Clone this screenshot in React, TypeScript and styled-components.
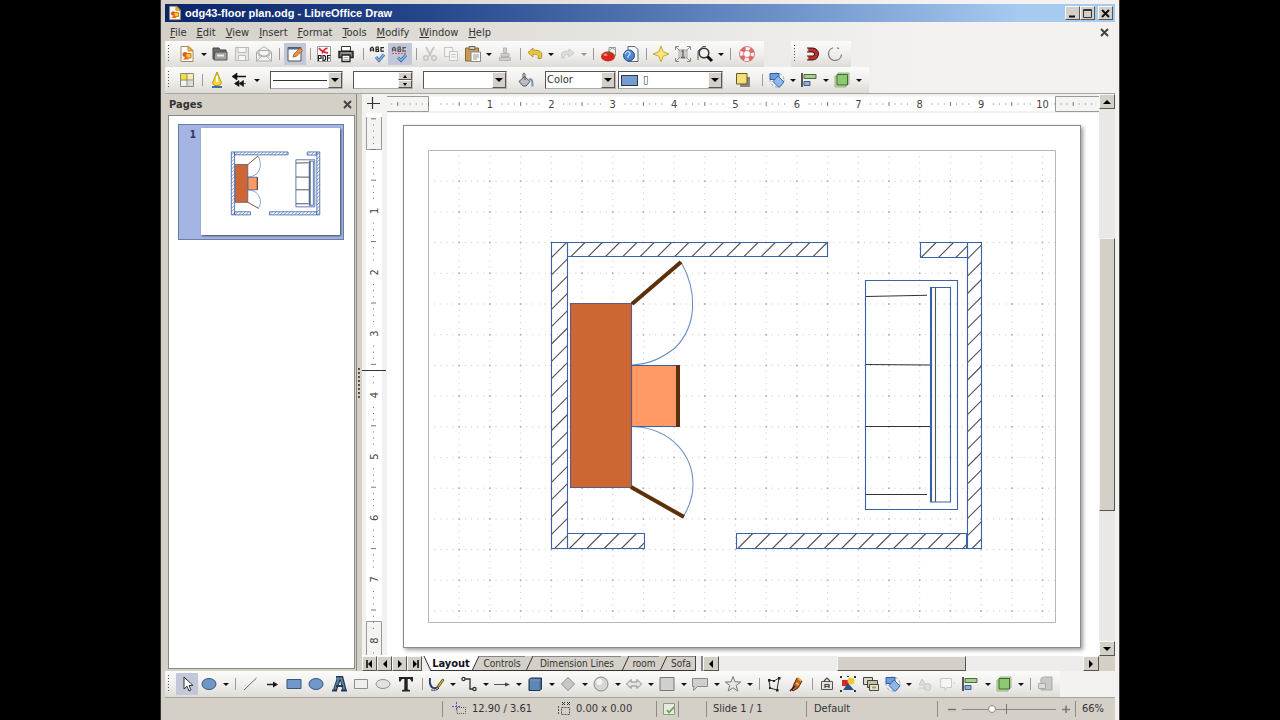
import React from "react";
import styled, { createGlobalStyle, css } from "styled-components";

const FACE = "#d4d0c8";
const BLUE = "#3a62a8";
const DARK = "#333";
const UI_FONT = '"DejaVu Sans Condensed", "DejaVu Sans", sans-serif';

const GlobalStyle = createGlobalStyle`
  * { box-sizing: border-box; }
  body { margin: 0; background: #000; font: 11px/14px ${UI_FONT}; font-stretch: semi-condensed; color: #333; }
  button, input, select { font: inherit; font-stretch: inherit; color: inherit; margin: 0; padding: 0; border: 0; background: none; border-radius: 0; }
  svg { display: block; flex: none; }
`;

const Desktop = styled.div`
  display: flex;
  justify-content: center;
  height: 100vh;
  overflow: hidden;
`;

const AppWindow = styled.div`
  display: flex;
  flex-direction: column;
  width: 75%;
  min-width: 920px;
  padding: 4px 4px 0 4px;
  border-left: 1px solid #333;
  border-right: 1px solid #444;
  background: linear-gradient(to right, ${FACE} 0, #f3f2f0 80%);
`;

const TitleBar = styled.header`
  display: flex;
  align-items: center;
  flex: none;
  gap: 2px;
  height: 18px;
  padding: 0 2px 0 2px;
  color: #fff;
  font-size: 11px;
  font-weight: bold;
  background: linear-gradient(to right, #0a2468 0, #26478c 28%, #6d92c9 65%, #a6caf0 90%);
`;

const TitleText = styled.h1`
  flex: 1;
  margin: 0;
  font: bold 11px/16px "Liberation Sans", sans-serif;
`;

const TitleButtons = styled.div`
  display: flex;
  & > :last-child { margin-left: 3px; }
`;

const raised = css`
  display: grid;
  place-items: center;
  flex: none;
  background: ${FACE};
  border: 1px solid;
  border-color: #f8f8f6 #555 #555 #f8f8f6;
`;

const CaptionButton = styled.button`
  ${raised}
  width: 15px;
  height: 14px;
`;

const MenuBar = styled.nav`
  display: flex;
  align-items: center;
  flex: none;
  height: 20px;
  margin-bottom: -1px;
`;

const MenuButton = styled.button`
  padding: 1px 5px 0 5px;
  &::first-letter { text-decoration: underline; }
`;

const DocClose = styled.button`
  display: grid;
  place-items: center;
  width: 22px;
  margin-left: auto;
`;

const ToolbarRow = styled.div<{ $gap?: number }>`
  display: flex;
  flex: none;
  gap: ${(p) => p.$gap ?? 0}px;
`;

const Toolbar = styled.div`
  display: flex;
  align-items: center;
  flex: none;
  height: 26px;
  padding-right: 5px;
  background: linear-gradient(#fbfbfa, #f0efed 50%, #dedcd7);
`;

const Grip = styled.span`
  width: 3px;
  height: 18px;
  margin: 0 5px 0 3px;
  background: repeating-linear-gradient(#555 0 1px, transparent 1px 3px) 0 0 / 1px 100% no-repeat;
`;

const ToolButton = styled.button<{ $w?: number; $on?: boolean }>`
  display: grid;
  place-items: center;
  flex: none;
  width: ${(p) => p.$w ?? 22}px;
  height: 22px;
  background: ${(p) => (p.$on ? "#c3c8d8" : "none")};
`;

const Caret = styled.button`
  display: grid;
  place-items: center;
  flex: none;
  width: 11px;
  height: 22px;
  &::before {
    content: "";
    border: 3px solid transparent;
    border-top-color: #111;
    border-bottom: 0;
  }
  &:disabled::before { border-top-color: #999; }
`;

const Separator = styled.span`
  flex: none;
  width: 1px;
  height: 12px;
  margin: 0 4px;
  background: #9d9a94;
`;

const Field = styled.span<{ $w: number; $ml?: number }>`
  display: grid;
  grid-template: 100% / 100%;
  align-items: center;
  flex: none;
  width: ${(p) => p.$w}px;
  height: 18px;
  margin-left: ${(p) => p.$ml ?? 0}px;
  background: #fff;
  border: 1px solid;
  border-color: #555 #bbb #aaa #555;
  & > * { grid-area: 1 / 1; }
`;

const FieldSelect = styled.select<{ $pad?: number }>`
  appearance: none;
  width: 100%;
  height: 16px;
  padding-left: ${(p) => p.$pad ?? 1}px;
`;

const FieldInput = styled.input`
  width: 100%;
  height: 16px;
`;

const FieldArrow = styled.span`
  ${raised}
  justify-self: end;
  width: 14px;
  height: 16px;
  pointer-events: none;
`;

const LinePreview = styled.span`
  height: 1px;
  margin: 0 15px 0 2px;
  background: #333;
  pointer-events: none;
`;

const Swatch = styled.span`
  width: 17px;
  height: 11px;
  margin-left: 2px;
  background: #729fcf;
  border: 1px solid #335;
  pointer-events: none;
`;

const SpinButtons = styled.span`
  display: flex;
  flex-direction: column;
  justify-self: end;
`;

const SpinButton = styled.button`
  ${raised}
  width: 14px;
  height: 8px;
`;

const Bucket = styled.button`
  display: grid;
  place-items: center;
  width: 38px;
  height: 22px;
`;

const Main = styled.main`
  display: flex;
  flex: 1;
  min-height: 0;
  border-top: 1px solid #a9a69f;
`;

const PagesPanel = styled.aside`
  display: flex;
  flex-direction: column;
  flex: none;
  width: 192px;
  padding: 0 1px 2px 3px;
  background: ${FACE};
  border-right: 1px solid #8c8983;
`;

const PanelHeader = styled.div`
  display: flex;
  align-items: center;
  justify-content: space-between;
  height: 21px;
  padding: 0 3px 0 1px;
`;

const PanelTitle = styled.h2`
  margin: 0;
  font-size: 11px;
  line-height: 14px;
`;

const PageList = styled.ol`
  flex: 1;
  margin: 0;
  padding: 8px 10px 0 9px;
  list-style: none;
  background: #fff;
  border: 1px solid #8a8883;
`;

const PageItem = styled.li`
  display: flex;
  justify-content: flex-end;
  gap: 5px;
  padding: 3px 3px 4px 4px;
  background: #a4b5e4;
  border: 1px solid #6a7cae;
`;

const PageNumber = styled.span`
  font-weight: bold;
  font-size: 10px;
  color: #335;
`;

const Thumb = styled.div`
  width: 139px;
  background: #fff;
  box-shadow: 1px 1px 2px #445;
  & > svg { width: 100%; height: auto; }
`;

const Splitter = styled.div`
  display: flex;
  align-items: center;
  width: 5px;
  flex: none;
  background: ${FACE};
  &::before {
    content: "";
    width: 2px;
    height: 30px;
    margin-left: 1px;
    background: repeating-linear-gradient(#555 0 2px, transparent 2px 4px);
  }
`;

const Editor = styled.section`
  display: grid;
  flex: 1;
  min-width: 0;
  grid-template: 19px minmax(0, 1fr) 15px / 25px minmax(0, 1fr) 16px;
`;

const RulerCorner = styled.div`
  background: #f3f3f1;
`;

const RulerStrip = styled.div`
  overflow: hidden;
  background: #fff;
`;

const Canvas = styled.div`
  overflow: hidden;
  padding: 13px 0 0 17px;
  background: #fff;
`;

const Sheet = styled.div`
  width: 676px;
  background: #fff;
  outline: 1px solid #8a8a8a;
  box-shadow: 2px 2px 4px 1px #999;
`;

const VScroll = styled.div`
  display: flex;
  flex-direction: column;
  grid-column: 3;
  grid-row: 1 / span 2;
  background: #e9e8e5;
`;

const ScrollButton = styled.button`
  ${raised}
  width: 16px;
  height: 15px;
`;

const Track = styled.div<{ $vertical?: boolean }>`
  display: flex;
  flex: 1;
  flex-direction: ${(p) => (p.$vertical ? "column" : "row")};
`;

const ScrollThumb = styled.div`
  background: ${FACE};
  border: 1px solid;
  border-color: #f6f5f2 #555 #555 #f6f5f2;
`;

const Space = styled.span<{ $grow: number }>`
  flex: ${(p) => p.$grow};
`;

const VThumb = styled(ScrollThumb)`
  flex: 273;
`;

const HThumb = styled(ScrollThumb)`
  flex: 129;
`;

const BottomRow = styled.div`
  display: flex;
  grid-column: 1 / span 2;
  background: #eeedeb;
`;

const NavButton = styled(ScrollButton)`
  width: 15px;
`;

const TabStrip = styled.div`
  display: flex;
  margin-left: 1px;
  background: ${FACE};
  border-right: 1px solid #444;
`;

const Tab = styled.button<{ $active?: boolean; $w: number }>`
  width: ${(p) => p.$w}px;
  height: 15px;
  border-top: 1px solid ${(p) => (p.$active ? "#fff" : "#888")};
  border-bottom: 1px solid #333;
  background: ${(p) => (p.$active ? "#fff" : FACE)};
  font-size: ${(p) => (p.$active ? 11 : 10)}px;
  font-weight: ${(p) => (p.$active ? "bold" : "normal")};
  line-height: 13px;
  white-space: nowrap;
  color: ${(p) => (p.$active ? "#112" : "#333")};
`;

const TabSplit = styled.span`
  width: 7px;
  border-right: 2px solid #888;
`;

const ScrollCorner = styled.div`
  background: ${FACE};
`;

const StatusBar = styled.footer`
  display: flex;
  align-items: center;
  flex: none;
  height: 23px;
  background: ${FACE};
  border-top: 1px solid #a5a29b;
`;

const StatusCell = styled.div<{ $w?: number; $pad?: number }>`
  display: flex;
  align-items: center;
  flex: ${(p) => (p.$w ? "none" : "1")};
  width: ${(p) => (p.$w ? p.$w + "px" : "auto")};
  height: 16px;
  gap: 5px;
  padding-left: ${(p) => p.$pad ?? 0}px;
  border-left: 1px solid #8e8b85;
  white-space: nowrap;
  &:first-child { border-left: 0; }
`;

const Reading = styled.span<{ $w: number }>`
  display: flex;
  align-items: center;
  gap: 5px;
  width: ${(p) => p.$w}px;
`;

const Slider = styled.input`
  appearance: none;
  width: 94px;
  height: 10px;
  background:
    linear-gradient(#777, #777) 44px 0 / 1px 10px no-repeat,
    linear-gradient(#888, #888) 0 5px / 100% 1px no-repeat;
  &::-webkit-slider-thumb {
    appearance: none;
    width: 8px;
    height: 8px;
    background: #fff;
    border: 1px solid #888;
    border-radius: 50%;
  }
`;

const ZoomStep = styled.button`
  display: grid;
  place-items: center;
  width: 10px;
  height: 14px;
`;

/* ---------- icons ---------- */

const abc = (
  <g fill="none" stroke="#222" strokeWidth="1.2">
    <path d="M1.5 6.5V3.5L3 2l1.500 1.500V6.500M1.500 5h3M7 2v4.500h2.500V4.500H7M7 2h2.200v2.500M15 2.600h-3v3.500h3" />
  </g>
);
const pageShape = <path d="M4 1.500h7l3.500 3.500v11.500H4z" fill="#fff" stroke="#999" />;
const rotateShape = (
  <>
    <circle cx="9" cy="9" r="7" fill="none" stroke="#9ab" strokeDasharray="3 2" />
    <path d="M2 2.500h9v6H2z" fill="#6f9fdb" stroke="#2f5d9e" />
    <path d="M10 5l6 6-5 5.500-6-6z" fill="#8fb8ea" stroke="#3a6ab0" />
  </>
);
const alignShape = (
  <>
    <path d="M2 2v14" stroke="#222" strokeWidth="1.500" />
    <path d="M4 3.500h12v4H4z" fill="#a7cf8f" stroke="#4a6b3a" />
    <path d="M4 10.500h6v4H4z" fill="#8db4da" stroke="#3c5f85" />
  </>
);
const arrangeShape = (
  <>
    <path d="M5 2h11v11H5zM2 5h11v11H2z" fill="#b7dca0" stroke="#9cb58c" />
    <path d="M4 3.500h10.500v10.500H4z" fill="#8fc873" stroke="#3f6b2c" />
  </>
);

const ICONS: Record<string, React.ReactNode> = {
  doc: (
    <>
      <path d="M3 1.500h8l4 4v11H3z" fill="#fff" stroke="#a5895a" />
      <path d="M10 1.500v4.500h5z" fill="#f6b83a" stroke="#c98a1a" />
      <circle cx="7" cy="9.500" r="2.500" fill="#e2571f" />
      <path d="M8 8.500h5v4.500H8z" fill="#f7c83e" stroke="#d0701c" />
      <path d="M5 14.500l3-3.500 3 3.500z" fill="#e06a1f" />
    </>
  ),
  open: (
    <>
      <path d="M2 3h6l1 2h6v9H2z" fill="#6f6f69" stroke="#444" />
      <path d="M4 7h12v8H3z" fill="#a3a39c" stroke="#555" />
      <path d="M6 9.500h7v2H6z" fill="#eee" />
    </>
  ),
  save: (
    <g fill="#e6e6e4" stroke="#bbb">
      <path d="M2.500 2.500h13v13h-13z" />
      <path d="M5 2.500h8v5H5zM5.500 10.500h7v5h-7z" fill="#f7f7f6" />
    </g>
  ),
  mail: (
    <g fill="#f5f5f3" stroke="#aaa">
      <path d="M1.500 7L9 1.500 16.500 7v9h-15z" />
      <path d="M4 5.500h10V11H4z" />
      <path d="M1.500 7.500L9 12l7.500-4.500M1.500 16L7 11M16.500 16L11 11" fill="none" />
    </g>
  ),
  edit: (
    <>
      <path d="M2 2.500h13v13.500H2z" fill="#fafafa" stroke="#555" />
      <path d="M2 3.500h13" stroke="#4a6a9a" strokeWidth="2" />
      <path d="M7 12l1-3 6-6 2.500 2.500-6.500 6z" fill="#f0913a" stroke="#a5521a" strokeWidth=".8" />
    </>
  ),
  pdf: (
    <>
      <path d="M2.500 1.500h13v15h-13z" fill="#fff" stroke="#999" />
      <path d="M4 3c2 3 5 4.500 9 5M12.500 3C9 4 8 6 7 8.500" fill="none" stroke="#d23" strokeWidth="1.600" />
      <path d="M3.500 16v-5.500H6v3H3.500M8 10.500v5h1.500l1-1v-3l-1-1zM12.500 16v-5.500h3M12.500 13h2.500" fill="none" stroke="#222" strokeWidth="1.200" />
    </>
  ),
  print: (
    <>
      <path d="M4.500 1.500h9V6h-9z" fill="#fff" stroke="#333" />
      <path d="M2 6.500h14v6H2z" fill="#7c7c76" stroke="#222" strokeWidth="1.500" />
      <path d="M5 10h8v6.500H5z" fill="#fff" stroke="#222" strokeWidth="1.300" />
      <path d="M6.500 12.500h5M6.500 14.500h5M4 8h10" stroke="#aaa" />
    </>
  ),
  abc: (
    <>
      {abc}
      <path d="M7 12l3 3.500 5-6" fill="none" stroke="#3f6fae" strokeWidth="3" />
      <path d="M7 12l3 3.500 5-6" fill="none" stroke="#8db8ea" strokeWidth="1.200" />
    </>
  ),
  abcAuto: (
    <>
      <g opacity=".7">{abc}</g>
      <path d="M1 8.500h14" stroke="#d55" strokeDasharray="2 1" />
      <path d="M7 12.500l3 3 5-5.500" fill="none" stroke="#3f6fae" strokeWidth="3" />
      <path d="M7 12.500l3 3 5-5.500" fill="none" stroke="#8db8ea" strokeWidth="1.200" />
    </>
  ),
  cut: (
    <g fill="none" stroke="#c4c4c2" strokeWidth="1.600">
      <path d="M5 2l5 9M13 2L8 11" />
      <circle cx="5" cy="13" r="2.300" />
      <circle cx="13" cy="13" r="2.300" />
    </g>
  ),
  copy: (
    <g fill="#f4f4f2" stroke="#c4c4c2">
      <path d="M2.500 2.500h8v9h-8z" />
      <path d="M7.500 6.500h8v9h-8z" />
      <path d="M9.500 9.500h4M9.500 12h4" />
    </g>
  ),
  paste: (
    <>
      <path d="M1.500 3h13v13h-13z" fill="#c79a55" stroke="#8a6430" />
      <path d="M5 1.500h6v3H5z" fill="#ccc" stroke="#666" />
      <path d="M7 7h9.500v9.500H7z" fill="#fafafa" stroke="#888" />
      <path d="M9 10h6M9 12h6M9 14h4" stroke="#999" />
    </>
  ),
  brush: (
    <g fill="#cfcecb" stroke="#b6b5b2">
      <path d="M7.500 3h3v4.500h-3zM5 8.500h8v3H5zM3.500 12.500h11v3h-11z" />
    </g>
  ),
  undo: <path d="M7 3L2 7.500 7 12V9.500c4-.5 6 0 5 4h3c3-7-2-8.500-8-8.500z" fill="#e9c53d" stroke="#a7831c" strokeWidth=".8" />,
  redo: <path d="M11 4l5 4-5 4V9.800c-4-.5-5 0-5 3.200H4c-2-6 2-7 7-6.800z" fill="#ddd" stroke="#c0c0bd" strokeWidth=".8" />,
  gallery: (
    <>
      <path d="M9 2.500h6.500V11H9z" fill="#f2f2f0" stroke="#999" />
      <path d="M10 5c2-3 4-2 4 0" fill="none" stroke="#888" />
      <ellipse cx="8" cy="11.500" rx="7" ry="5" fill="#d5281e" />
      <ellipse cx="5.500" cy="9.800" rx="2" ry="1.200" fill="#f08a80" />
      <path d="M7 7.500l4 1-2-3z" fill="#4a8a2a" />
    </>
  ),
  globe: (
    <>
      <path d="M6 1.500h7l3 3v12H6z" fill="#f4f6f8" stroke="#667" />
      <circle cx="7" cy="10.500" r="5.500" fill="#4b86cf" stroke="#23508c" />
      <path d="M3 9c2-3 4-3 5-1s-3 2-2 5" fill="none" stroke="#bcd8f4" strokeWidth="1.500" />
    </>
  ),
  star4: <path d="M9 1l2.200 5.800L17 9l-5.800 2.200L9 17l-2.200-5.800L1 9l5.800-2.200z" fill="#f7e67c" stroke="#c9a82c" />,
  fit: (
    <>
      <path d="M4 4h10v10H4z" fill="#c8c8c8" />
      <path d="M1.500 5V1.500H5M13 1.500h3.500V5M16.500 13v3.500H13M5 16.500H1.500V13" fill="none" stroke="#888" />
      <path d="M7.500 6.500L9 5.500v7M7 12.500h4" fill="none" stroke="#666" strokeWidth="1.300" />
      <path d="M2 2l4 4M16 2l-4 4M2 16l4-4M16 16l-4-4" stroke="#999" />
    </>
  ),
  zoom: (
    <>
      <path d="M2 15V6l5-4.500h3" fill="none" stroke="#555" />
      <circle cx="8" cy="8" r="4.800" fill="#eef2f5" stroke="#333" strokeWidth="1.500" />
      <path d="M11.500 11.500l4.500 4.500" stroke="#111" strokeWidth="3" />
    </>
  ),
  help: (
    <>
      <circle cx="9" cy="9" r="5.500" fill="none" stroke="#fbf4f3" strokeWidth="4" />
      <circle cx="9" cy="9" r="5.500" fill="none" stroke="#df6a64" strokeWidth="4" strokeDasharray="4.300 4.340" strokeDashoffset="-2.200" />
      <circle cx="9" cy="9" r="7.500" fill="none" stroke="#c66" strokeWidth=".8" />
      <circle cx="9" cy="9" r="3.500" fill="#fff" stroke="#c66" strokeWidth=".8" />
    </>
  ),
  magnet: (
    <>
      <path d="M3 5h5.500a4 4 0 0 1 0 8H3" fill="none" stroke="#4a1412" strokeWidth="5" />
      <path d="M4 5h4.500a4 4 0 0 1 0 8H4" fill="none" stroke="#b8322e" strokeWidth="3" />
      <path d="M3.500 3.500v3M3.500 11.500v3" stroke="#ddd" strokeWidth="1.500" />
    </>
  ),
  rotateArc: <path d="M7 2.800A6.500 6.500 0 1 0 15.500 9.500M11 2.800l2 .8" fill="none" stroke="#777" strokeWidth="1.200" />,
  styles: (
    <>
      <path d="M2.500 2.500h13v13h-13z" fill="#f3f3ee" stroke="#8a8a80" />
      <path d="M3 3h6v6H3z" fill="#f6df3d" />
      <path d="M9.500 3h5.500v6H9.500z" fill="#f7eeb0" />
      <path d="M9.500 10h5.500v5H9.500z" fill="#d5dde5" />
      <path d="M9 2.500v13M2.500 9h13" stroke="#8a8a80" />
    </>
  ),
  line: (
    <>
      <path d="M9 1l4.500 11-2 2.500h-5L4.500 12z" fill="#f3d832" stroke="#b8961c" />
      <path d="M9 5v6" stroke="#fff" strokeWidth="2" />
      <path d="M4 15h10v2H4z" fill="#3f6fae" />
    </>
  ),
  arrows: (
    <>
      <path d="M5 5.500h11M5 12.500h2" stroke="#111" strokeWidth="1.600" />
      <path d="M7 2L2 5.500 7 9zM9 9.500L4.500 12.500 9 15.500zM13.500 9.500L9 12.500l4.500 3zM13 12.500h3" fill="#111" stroke="#111" strokeWidth=".6" />
    </>
  ),
  bucket: (
    <>
      <path d="M2 10.500l5.500-5 5.500 5-4 4.500H6z" fill="#b9bcc0" stroke="#555" />
      <path d="M8 9V3c0-1-2-1-2 0v4" fill="none" stroke="#555" />
      <path d="M12 8.500c3-1 3.500 1 3.500 7" fill="none" stroke="#6d8fbd" strokeWidth="2" />
    </>
  ),
  shadow: (
    <>
      <path d="M6 6h10v10H6z" fill="#8b877a" />
      <path d="M2.500 2.500h10.500V13H2.500z" fill="#f3de79" stroke="#6b5a1e" />
    </>
  ),
  rotate: rotateShape,
  align: alignShape,
  arrange: arrangeShape,
  select: <path d="M6 2v12l3-2.700 2 4.700 2-1-2-4.500h4z" fill="#fff" stroke="#333" />,
  ellipse: <ellipse cx="9" cy="9" rx="7" ry="5.500" fill="#6f97c8" stroke="#35567e" />,
  thinLine: <path d="M3 15L15.500 3" stroke="#666" />,
  arrow: (
    <>
      <path d="M4 9.500h7" stroke="#222" strokeWidth="1.500" />
      <path d="M10 6.500l5 3-5 3z" fill="#111" />
    </>
  ),
  rect: <path d="M2 4.500h14v9H2z" fill="#6f97c8" stroke="#35567e" />,
  fontwork: (
    <>
      <path d="M6 3h5.500l3 12M9 3L5 15" fill="none" stroke="#22384e" strokeWidth="4" />
      <path d="M6 3.500h5.500l2.700 11M8.500 4L5 14.500" fill="none" stroke="#5e83a8" strokeWidth="1.800" />
      <path d="M6 11h7M2 15.500h5M11 15.500h6" stroke="#22384e" strokeWidth="2" />
    </>
  ),
  rectGrey: <path d="M2.500 4.500h13v9h-13z" fill="#eeeeec" stroke="#8e8e8c" />,
  ellipseGrey: <ellipse cx="9" cy="9" rx="7" ry="4.500" fill="#e2e2e0" stroke="#8e8e8c" />,
  text: <path d="M2 2h14v4.500h-1.500L13 4h-2.300v10.500L13 15v1.500H5V15l2.300-.5V4H5L3.500 6.500H2z" fill="#222" />,
  curve: (
    <>
      <path d="M2 3c-1 9 3 12 8 9" fill="none" stroke="#2d3f63" strokeWidth="2" />
      <path d="M3 15c3 1 7 0 8-2" fill="none" stroke="#345" />
      <path d="M16 5l-5 7-2 1 1-3 4.500-6z" fill="#d5b551" stroke="#66521a" />
    </>
  ),
  connector: (
    <g fill="none" stroke="#333" strokeWidth="1.300">
      <path d="M5 4h5v10h3" />
      <circle cx="3.500" cy="4" r="1.600" />
      <circle cx="14.500" cy="14" r="1.600" />
    </g>
  ),
  lineArrow: (
    <>
      <path d="M1 9.500h12" stroke="#555" />
      <path d="M12 7.500l5 2-5 2z" fill="#444" />
    </>
  ),
  cube: (
    <>
      <path d="M3 4.500L4.500 3h11v11L14 15.500H3z" fill="#3f6791" stroke="#22374d" />
      <path d="M4 6h9.500v9H4z" fill="#5d88b5" />
      <path d="M4 5h10" stroke="#9ab8d6" />
    </>
  ),
  diamond: <path d="M9 2.500L15.500 9 9 15.500 2.500 9z" fill="#c9c9c7" stroke="#888" />,
  ball: (
    <>
      <circle cx="9" cy="9" r="7" fill="#d6d6d4" stroke="#888" />
      <circle cx="7.500" cy="7" r="3" fill="#f4f4f3" />
    </>
  ),
  doubleArrow: <path d="M1.500 9L6 4.500V7h6V4.500L16.500 9 12 13.500V11H6v2.500z" fill="#e6e6e4" stroke="#888" />,
  square: <path d="M2 2.500h14v13H2z" fill="#d0d0ce" stroke="#777" />,
  callout: <path d="M1.500 3.500h15v8h-10l-4 4 .5-4H1.500z" fill="#cfcfcd" stroke="#888" />,
  star5: <path d="M9 1.500l2 5.300 5.700.2-4.500 3.500 1.600 5.500L9 12.800l-4.800 3.200 1.600-5.500L1.300 7 7 6.800z" fill="#e6e6e4" stroke="#777" />,
  polygon: (
    <>
      <path d="M4 5l5 1 5-3-2 12-7-2z" fill="none" stroke="#333" />
      <path d="M3 4h2.500v2.500H3zM8 5h2v2H8zM13 2h2.500v2.500H13zM11 14h2.500v2.500H11zM4 12h2v2H4z" fill="#222" />
    </>
  ),
  glue: (
    <>
      <path d="M10 3l5 3-4 7-5 3-1-1 2-6z" fill="#c2602b" stroke="#4c2b10" />
      <path d="M11 3l3.500 3M9 8l3 2" stroke="#e9b13c" strokeWidth="2" />
      <path d="M3 16l5-5" stroke="#222" strokeWidth="1.500" />
    </>
  ),
  group: (
    <>
      <path d="M3.500 6.500h11v8h-11z" fill="#e8e4d8" stroke="#555" />
      <path d="M6 6l3-3 3 3M7 13V9.500h4V13M7 11.500h4" fill="none" stroke="#444" strokeWidth="1.200" />
    </>
  ),
  shapes: (
    <>
      <path d="M3 5h7v6H3z" fill="#d5281e" />
      <circle cx="12" cy="6" r="3.500" fill="#f3c93b" />
      <path d="M9 8l6 7H4z" fill="#2d4e86" />
      <path d="M1 1h2v2H1zM15 1h2v2h-2zM1 15h2v2H1zM15 15h2v2h-2zM8 1h2v1H8z" fill="#333" />
    </>
  ),
  windows: (
    <g stroke="#444">
      <path d="M1.500 2.500h9v7h-9z" fill="#ddd9c8" />
      <path d="M5.500 5.500h10v7h-10z" fill="#c8c0a0" />
      <path d="M7.500 9.500h9v6h-9z" fill="#e8e2cc" />
      <path d="M10 11.500h4v2h-4z" fill="#a49a6c" stroke="none" />
    </g>
  ),
  convert: (
    <g fill="#ddd" stroke="#c6c6c4">
      <path d="M3 10l3-6 4 6z" />
      <circle cx="11.500" cy="12" r="3.500" />
      <path d="M3 13h5" />
    </g>
  ),
  convert3d: (
    <g fill="#f6f6f4" stroke="#c9c9c7">
      <path d="M2.500 3.500h11v9H9l-2 3v-3H2.500z" />
      <path d="M15 8h2" />
    </g>
  ),
  extrude: (
    <g fill="#c9c8c5" stroke="#aaa9a6">
      <path d="M5 3.500L7 2h9v13H5z" />
      <path d="M2.500 8.500h7v5h-7z" fill="#dddcd9" />
    </g>
  ),
};

const Icon = ({ name, size = 18 }: { name: string; size?: number }) => (
  <svg width={size} height={size} viewBox="0 0 18 18" aria-hidden="true">
    {ICONS[name]}
  </svg>
);

const Triangle = ({ dir, bar }: { dir: "up" | "down" | "left" | "right"; bar?: boolean }) => {
  const shapes = { up: "M0 6l4-4 4 4z", down: "M0 2h8l-4 4z", left: "M6 0v8L2 4z", right: "M2 0l4 4-4 4z" };
  return (
    <svg width="8" height="8" viewBox="0 0 8 8" aria-hidden="true">
      <path d={shapes[dir]} fill="#000" />
      {bar && <path d={dir === "left" ? "M1 0v8" : "M7 0v8"} stroke="#000" strokeWidth="1.500" />}
    </svg>
  );
};

const Cross = ({ size = 9, color = "#111" }: { size?: number; color?: string }) => (
  <svg width={size} height={size} viewBox="0 0 9 9" aria-hidden="true">
    <path d="M1 1l7 7M8 1L1 8" stroke={color} strokeWidth="2" />
  </svg>
);

/* ---------- toolbars from data ---------- */

type Item = { icon: string; label: string; w?: number; on?: boolean; caret?: boolean | "off" } | "sep";

const Tools = ({ items }: { items: Item[] }) => (
  <>
    {items.map((it, i) =>
      it === "sep" ? (
        <Separator key={i} />
      ) : (
        <React.Fragment key={i}>
          <ToolButton type="button" aria-label={it.label} $w={it.w} $on={it.on}>
            <Icon name={it.icon} />
          </ToolButton>
          {it.caret && <Caret type="button" aria-label={it.label + " options"} disabled={it.caret === "off"} />}
        </React.Fragment>
      )
    )}
  </>
);

const STANDARD: Item[] = [
  { icon: "doc", label: "New", caret: true },
  { icon: "open", label: "Open" },
  { icon: "save", label: "Save" },
  { icon: "mail", label: "E-mail" },
  "sep",
  { icon: "edit", label: "Edit file", on: true },
  "sep",
  { icon: "pdf", label: "Export as PDF", w: 18 },
  { icon: "print", label: "Print", w: 26 },
  "sep",
  { icon: "abc", label: "Spelling", w: 20 },
  { icon: "abcAuto", label: "Auto spellcheck", w: 24, on: true },
  "sep",
  { icon: "cut", label: "Cut", w: 18 },
  { icon: "copy", label: "Copy", w: 24 },
  { icon: "paste", label: "Paste", w: 20, caret: true },
  { icon: "brush", label: "Format paintbrush" },
  "sep",
  { icon: "undo", label: "Undo", w: 20, caret: true },
  { icon: "redo", label: "Redo", caret: "off" },
  "sep",
  { icon: "gallery", label: "Gallery" },
  { icon: "globe", label: "Hyperlink" },
  "sep",
  { icon: "star4", label: "Effects", w: 20 },
  { icon: "fit", label: "Display grid", w: 24 },
  { icon: "zoom", label: "Zoom", w: 20, caret: true },
  "sep",
  { icon: "help", label: "Help", w: 24 },
];

const DRAWING: Item[] = [
  { icon: "select", label: "Select", on: true },
  { icon: "ellipse", label: "Recent shape", caret: true },
  "sep",
  { icon: "thinLine", label: "Line", w: 20 },
  { icon: "arrow", label: "Line ends with arrow", w: 24 },
  { icon: "rect", label: "Rectangle", w: 20 },
  { icon: "ellipse", label: "Ellipse", w: 24 },
  { icon: "fontwork", label: "Fontwork" },
  { icon: "rectGrey", label: "Unfilled rectangle" },
  { icon: "ellipseGrey", label: "Unfilled ellipse" },
  { icon: "text", label: "Text", w: 24 },
  "sep",
  { icon: "curve", label: "Curve", w: 20, caret: true },
  { icon: "connector", label: "Connector", caret: true },
  { icon: "lineArrow", label: "Lines and arrows", caret: true },
  { icon: "cube", label: "3D objects", caret: true },
  { icon: "diamond", label: "Basic shapes", caret: true },
  { icon: "ball", label: "Symbol shapes", caret: true },
  { icon: "doubleArrow", label: "Block arrows", caret: true },
  { icon: "square", label: "Flowcharts", caret: true },
  { icon: "callout", label: "Callouts", caret: true },
  { icon: "star5", label: "Stars", caret: true },
  "sep",
  { icon: "polygon", label: "Points", w: 20 },
  { icon: "glue", label: "Glue points", w: 24 },
  "sep",
  { icon: "group", label: "Fontwork gallery", w: 20 },
  { icon: "shapes", label: "From file" },
  { icon: "windows", label: "Gallery", w: 24 },
  { icon: "rotate", label: "Effects", w: 20, caret: true },
  { icon: "convert", label: "Convert" },
  { icon: "convert3d", label: "Convert to 3D" },
  { icon: "align", label: "Alignment", w: 24, caret: true },
  { icon: "arrange", label: "Arrange", caret: true },
  "sep",
  { icon: "extrude", label: "Extrusion", w: 20 },
];

/* ---------- floor plan ---------- */

const HATCH = 17.3;
const INCH = 61.4;
const MARGIN = { x: 428.5, y: 150.5, r: 1055.5, b: 622.5 };

const WALLS = [
  { x0: 551.5, y0: 242.5, x1: 567.5, y1: 548.5, c: 809 },
  { x0: 567.5, y0: 242.5, x1: 827.5, y1: 256.5, c: 827.5 },
  { x0: 920.5, y0: 242.5, x1: 967.5, y1: 257.5, c: 1178.7 },
  { x0: 967.5, y0: 242.5, x1: 981.5, y1: 548.5, c: 1243.7 },
  { x0: 567.5, y0: 533.5, x1: 644.5, y1: 548.5, c: 1118 },
  { x0: 736.5, y0: 533.5, x1: 966.5, y1: 548.5, c: 1286.3 },
];

const hatchPath = (w: (typeof WALLS)[number]) => {
  let d = "";
  const first = w.c - Math.ceil((w.c - w.x0 - w.y0) / HATCH) * HATCH;
  for (let c = first; c < w.x1 + w.y1; c += HATCH) {
    const a = Math.max(w.x0, c - w.y1);
    const b = Math.min(w.x1, c - w.y0);
    if (b - a > 1) d += `M${a} ${c - a}L${b} ${c - b}`;
  }
  return d;
};

const Grid = () => {
  const v: number[] = [];
  const h: number[] = [];
  for (let x = MARGIN.x + INCH / 2; x < MARGIN.r - 4; x += INCH / 2) v.push(x);
  for (let y = MARGIN.y + INCH / 2; y < MARGIN.b; y += INCH / 2) h.push(y);
  const dash = `1 ${INCH / 10 - 1}`;
  return (
    <>
      <g stroke="#c8c8c8" strokeDasharray={dash} strokeDashoffset=".5">
        {v.map((x) => <path key={x} d={`M${x} ${MARGIN.y}V${MARGIN.b}`} />)}
        {h.map((y) => <path key={y} d={`M${MARGIN.x} ${y}H${MARGIN.r}`} />)}
      </g>
      {v.map((x) => h.map((y) => <circle key={`${x},${y}`} cx={x} cy={y} r="1" fill="#b4b4b4" />))}
      <path d={`M${MARGIN.x} ${MARGIN.y}H${MARGIN.r}V${MARGIN.b}H${MARGIN.x}z`} fill="none" stroke="#b8b8b8" />
    </>
  );
};

const FloorPlan = ({ thumb }: { thumb?: boolean }) => (
  <svg width="676" height="521" viewBox="404 126 676 521" role="img" aria-label="Floor plan">
    {!thumb && <Grid />}
    <g fill="none" strokeWidth={thumb ? 4 : 1.1}>
      {WALLS.map((w, i) => (
        <React.Fragment key={i}>
          <path d={hatchPath(w)} stroke={thumb ? "#6f8cc4" : "#555"} />
          <path d={`M${w.x0} ${w.y0}H${w.x1}V${w.y1}H${w.x0}z`} stroke={BLUE} />
        </React.Fragment>
      ))}
      <path d="M681 262C697 290 698 325 675 348C662 358 650 364 632 365" stroke="#6d90c4" />
      <path d="M632 426.500C672 428 693 456 693 484C693 499 688 509 683 517" stroke="#6d90c4" />
      <path d="M631.500 365.500H678V426.500H631.500z" fill="#ff9966" stroke={BLUE} />
      <path d="M570.500 303.500H631.500V487.500H570.500z" fill="#cc6633" stroke="#5d5b8c" />
      <path d="M678 365V427M632 304L681 262M631 487L684 517" stroke="#5c3008" strokeWidth="4" />
      <path d="M865.500 280.500H957.500V509.500H865.500z" stroke={BLUE} />
      <path d="M866 296.500L927 295.200M866 364.500L930 365M866 426.500H930M866 494.500H927" stroke={DARK} />
      <path d="M930.500 287.500H950.500V502H930.500z" stroke={BLUE} />
      <path d="M931.500 287.500V502" stroke={BLUE} />
      <path d="M935.500 287.500V502" stroke="#555" />
    </g>
  </svg>
);

/* Tick marks for a ruler: tenth-inch dots, a longer mark on each half. */
const ticks = (origin: number, from: number, to: number, draw: (p: number, half: boolean) => string) => {
  let d = "";
  const step = INCH / 10;
  for (let i = Math.ceil((from - origin) / step); origin + i * step < to; i++) {
    const onInch = (i + 101) % 10 < 3 && i > 0;
    if (!onInch) d += draw(origin + i * step, (i + 100) % 5 === 0);
  }
  return d;
};

const HRuler = () => (
  <svg width="712" height="19" viewBox="387 95 712 19" fontFamily={UI_FONT} fontSize="11" fill="#444">
    <path d="M387 95H1099V97.500H387zM387 112H1099V114H387z" fill="#f1f1ef" />
    <path d="M380 97.500H428.500V112.500H380zM1055.500 97.500H1105V112.500H1055.500z" fill="#f4f4f2" stroke="#999" />
    <path d={ticks(428.5, 388, 1099, (p, half) => (half ? `M${p} 103V107` : `M${p} 104.500V105.500`))} stroke="#777" />
    {Array.from({ length: 10 }, (_, i) => (
      <text key={i} x={MARGIN.x + INCH * (i + 1)} y="109" textAnchor="middle">{i + 1}</text>
    ))}
  </svg>
);

const VRuler = () => (
  <svg width="25" height="542" viewBox="362 114 25 542" fontFamily={UI_FONT} fontSize="11" fill="#444">
    <path d="M362 114H366V656H362zM382 114H387V656H382z" fill="#f1f1ef" />
    <path d="M366.500 118V150.500H381.500V118M366.500 660V622.500H381.500V660" fill="#f4f4f2" stroke="#999" />
    <path d={ticks(150.5, 118, 656, (p, half) => (half ? `M371 ${p}H376` : `M373 ${p}H374`))} stroke="#777" />
    {Array.from({ length: 8 }, (_, i) => {
      const y = MARGIN.y + INCH * (i + 1);
      return <text key={i} transform={`translate(378 ${y}) rotate(-90)`} textAnchor="middle">{i + 1}</text>;
    })}
    <path d="M362 371.500H386" stroke="#333" />
  </svg>
);

/* Slanted edge between two sheet tabs */
const Slash = ({ left, right, back }: { left: string; right: string; back?: boolean }) => (
  <svg width="8" height="15" viewBox="0 0 8 15" aria-hidden="true">
    <path d="M0 0H8V15H0z" fill={left} />
    <path d={back ? "M1 0H8V15z" : "M8 0V15H1z"} fill={right} />
    <path d={back ? "M1 0L8 15" : "M8 0L1 15M0 14.500H8"} fill="none" stroke="#333" />
  </svg>
);

const MENUS = ["File", "Edit", "View", "Insert", "Format", "Tools", "Modify", "Window", "Help"];
const SHEETS = [
  { name: "Layout", w: 40, active: true },
  { name: "Controls", w: 46 },
  { name: "Dimension Lines", w: 88 },
  { name: "room", w: 30 },
  { name: "Sofa", w: 28 },
];

export default function App() {
  return (
    <>
      <GlobalStyle />
      <Desktop>
        <AppWindow>
          <TitleBar>
            <Icon name="doc" size={16} />
            <TitleText>odg43-floor plan.odg - LibreOffice Draw</TitleText>
            <TitleButtons>
              <CaptionButton type="button" aria-label="Minimize">
                <svg width="9" height="9"><path d="M1 7.500H7" stroke="#111" strokeWidth="2" /></svg>
              </CaptionButton>
              <CaptionButton type="button" aria-label="Maximize">
                <svg width="9" height="9"><path d="M.5 .5H8.500V8.500H.5zM.5 1.500H8.500" fill="none" stroke="#333" /></svg>
              </CaptionButton>
              <CaptionButton type="button" aria-label="Close"><Cross /></CaptionButton>
            </TitleButtons>
          </TitleBar>

          <MenuBar>
            {MENUS.map((m) => <MenuButton type="button" key={m}>{m}</MenuButton>)}
            <DocClose type="button" aria-label="Close document"><Cross color="#444" /></DocClose>
          </MenuBar>

          <ToolbarRow $gap={27}>
            <Toolbar><Grip /><Tools items={STANDARD} /></Toolbar>
            <Toolbar>
              <Grip />
              <Tools items={[{ icon: "magnet", label: "Snap" }, { icon: "rotateArc", label: "Rotate" }]} />
            </Toolbar>
          </ToolbarRow>

          <ToolbarRow>
            <Toolbar>
              <Grip />
              <Tools
                items={[
                  { icon: "styles", label: "Styles" },
                  "sep",
                  { icon: "line", label: "Line", w: 20 },
                  { icon: "arrows", label: "Arrow style", w: 24, caret: true },
                ]}
              />
              <Field $w={73} $ml={8}>
                <FieldSelect aria-label="Line style"><option></option></FieldSelect>
                <LinePreview />
                <FieldArrow><Triangle dir="down" /></FieldArrow>
              </Field>
              <Field $w={60} $ml={10}>
                <FieldInput aria-label="Line width" />
                <SpinButtons>
                  <SpinButton type="button" aria-label="Increase"><svg width="4" height="3"><path d="M0 3L2 0l2 3z" /></svg></SpinButton>
                  <SpinButton type="button" aria-label="Decrease"><svg width="4" height="3"><path d="M0 0h4L2 3z" /></svg></SpinButton>
                </SpinButtons>
              </Field>
              <Field $w={84} $ml={10}>
                <FieldSelect aria-label="Line color"><option></option></FieldSelect>
                <FieldArrow><Triangle dir="down" /></FieldArrow>
              </Field>
              <Bucket type="button" aria-label="Area"><Icon name="bucket" /></Bucket>
              <Field $w={71}>
                <FieldSelect aria-label="Area style"><option>Color</option></FieldSelect>
                <FieldArrow><Triangle dir="down" /></FieldArrow>
              </Field>
              <Field $w={105} $ml={2}>
                <FieldSelect aria-label="Area fill" $pad={24}><option>▯</option></FieldSelect>
                <Swatch />
                <FieldArrow><Triangle dir="down" /></FieldArrow>
              </Field>
            </Toolbar>
            <Toolbar>
              <Tools
                items={[
                  { icon: "shadow", label: "Shadow", w: 30 },
                  "sep",
                  { icon: "rotate", label: "Effects", w: 20, caret: true },
                  { icon: "align", label: "Alignment", caret: true },
                  { icon: "arrange", label: "Arrange", caret: true },
                ]}
              />
            </Toolbar>
          </ToolbarRow>

          <Main>
            <PagesPanel>
              <PanelHeader>
                <PanelTitle>Pages</PanelTitle>
                <button type="button" aria-label="Close pane"><Cross color="#444" /></button>
              </PanelHeader>
              <PageList>
                <PageItem>
                  <PageNumber>1</PageNumber>
                  <Thumb><FloorPlan thumb /></Thumb>
                </PageItem>
              </PageList>
            </PagesPanel>
            <Splitter />
            <Editor>
              <RulerCorner>
                <svg width="25" height="19"><path d="M5 9.500H18M10.500 3V15" stroke="#333" strokeWidth="1.200" /></svg>
              </RulerCorner>
              <RulerStrip><HRuler /></RulerStrip>
              <VScroll>
                <ScrollButton type="button" aria-label="Scroll up"><Triangle dir="up" /></ScrollButton>
                <Track $vertical><Space $grow={129} /><VThumb /><Space $grow={130} /></Track>
                <ScrollButton type="button" aria-label="Scroll down"><Triangle dir="down" /></ScrollButton>
              </VScroll>
              <RulerStrip><VRuler /></RulerStrip>
              <Canvas><Sheet><FloorPlan /></Sheet></Canvas>
              <BottomRow>
                <NavButton type="button" aria-label="First sheet"><Triangle dir="left" bar /></NavButton>
                <NavButton type="button" aria-label="Previous sheet"><Triangle dir="left" /></NavButton>
                <NavButton type="button" aria-label="Next sheet"><Triangle dir="right" /></NavButton>
                <NavButton type="button" aria-label="Last sheet"><Triangle dir="right" bar /></NavButton>
                <TabStrip role="tablist">
                  <Slash left="#eeedeb" right="#fff" back />
                  {SHEETS.map((s, i) => (
                    <React.Fragment key={s.name}>
                      {i > 0 && <Slash left={i === 1 ? "#fff" : FACE} right={FACE} />}
                      <Tab type="button" role="tab" aria-selected={!!s.active} $active={s.active} $w={s.w}>{s.name}</Tab>
                    </React.Fragment>
                  ))}
                </TabStrip>
                <TabSplit />
                <ScrollButton type="button" aria-label="Scroll left"><Triangle dir="left" /></ScrollButton>
                <Track><Space $grow={120} /><HThumb /><Space $grow={119} /></Track>
                <ScrollButton type="button" aria-label="Scroll right"><Triangle dir="right" /></ScrollButton>
              </BottomRow>
              <ScrollCorner />
            </Editor>
          </Main>

          <ToolbarRow>
            <Toolbar><Grip /><Tools items={DRAWING} /></Toolbar>
          </ToolbarRow>

          <StatusBar>
            <StatusCell />
            <StatusCell $w={214} $pad={9}>
              <Reading $w={99}>
                <svg width="15" height="14">
                  <path d="M4.500 0V9M0 4.500H9" stroke="#55c" strokeDasharray="2 1" />
                  <path d="M5 5.500H13.500V11.500H5z" fill="none" stroke="#555" strokeDasharray="1 1" />
                </svg>
                12.90 / 3.61
              </Reading>
              <Reading $w={90}>
                <svg width="15" height="14">
                  <path d="M2.500 4V12M5.500 5.500H13.500V12.500H5.500z" fill="none" stroke="#555" strokeDasharray="2 1" />
                  <path d="M6 0l3 3M9 0L6 3M11 0l3 3M14 0l-3 3" stroke="#333" />
                </svg>
                0.00 x 0.00
              </Reading>
            </StatusCell>
            <StatusCell $w={22} $pad={6}>
              <svg width="12" height="12">
                <path d="M.5 .5H11.500V11.500H.5z" fill="#e6eadf" stroke="#8a9a7a" />
                <path d="M4 7l2 2.500L11 4" fill="none" stroke="#6a9a4a" strokeWidth="1.500" />
              </svg>
            </StatusCell>
            <StatusCell $w={28} />
            <StatusCell $w={100} $pad={6}>Slide 1 / 1</StatusCell>
            <StatusCell $w={131} $pad={7}>Default</StatusCell>
            <StatusCell $w={138} $pad={9}>
              <ZoomStep type="button" aria-label="Zoom out"><svg width="8" height="8"><path d="M0 4.500H8" stroke="#777" strokeWidth="1.500" /></svg></ZoomStep>
              <Slider type="range" aria-label="Zoom" defaultValue="30" />
              <ZoomStep type="button" aria-label="Zoom in"><svg width="8" height="8"><path d="M0 4.500H8M4 .5V8" stroke="#777" strokeWidth="1.500" /></svg></ZoomStep>
            </StatusCell>
            <StatusCell $w={40} $pad={6}>66%</StatusCell>
          </StatusBar>
        </AppWindow>
      </Desktop>
    </>
  );
}
